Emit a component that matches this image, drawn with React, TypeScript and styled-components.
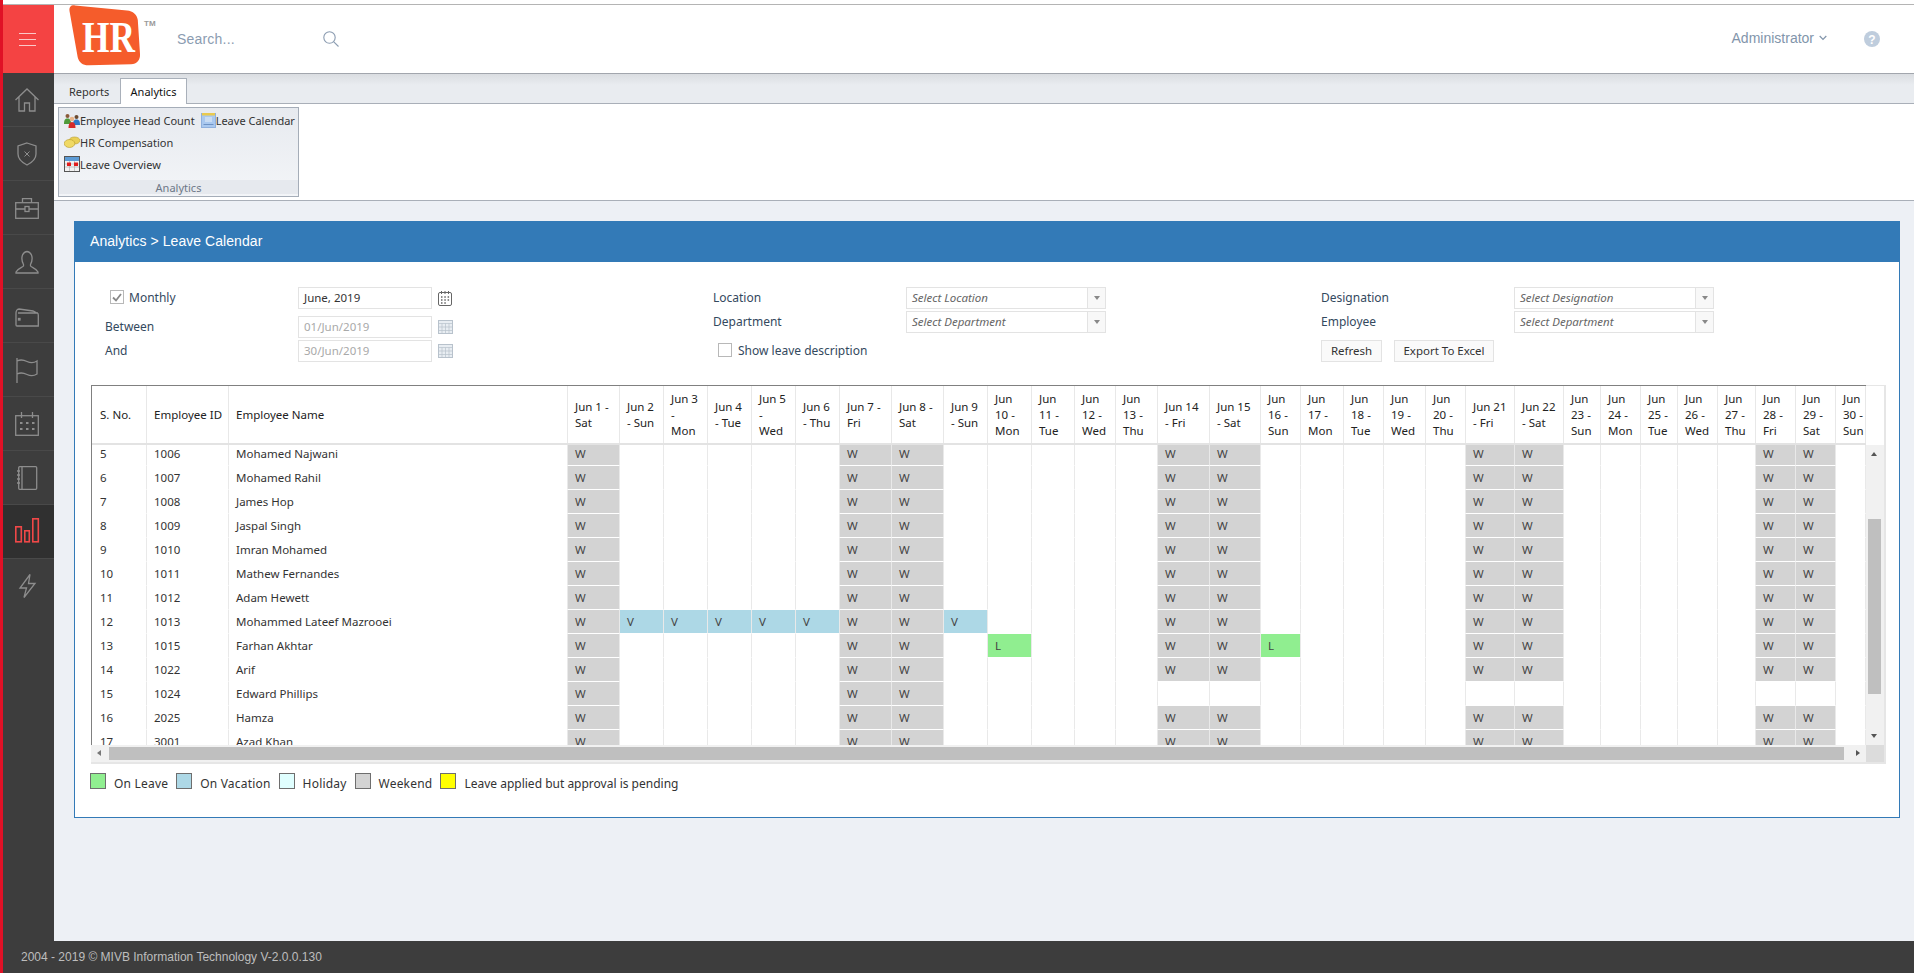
import React from "react";
import styled, { createGlobalStyle } from "styled-components";

const BODY_FONT = `"Noto Sans", "Liberation Sans", sans-serif`;
const UI_FONT = `"Liberation Sans", Arial, sans-serif`;

const GlobalStyle = createGlobalStyle`
  html, body { margin: 0; padding: 0; background: #fff; overflow: hidden; }
  * { box-sizing: border-box; }
`;

const Page = styled.div`
  width: 1914px; height: 973px; border-left: 3px solid #e01126;
  display: flex; flex-direction: column; font-family: ${BODY_FONT}; background: #fff;
`;
const TopLine = styled.div`height: 5px; border-bottom: 1px solid #b4b4b4; flex: none;`;
const MainRow = styled.div`flex: 1; display: flex; min-height: 0;`;
const Sidebar = styled.aside`width: 51px; flex: none; background: #3d3d3d; display: flex; flex-direction: column;`;
const MenuButton = styled.div`
  height: 68px; background: #f44343; display: flex; flex-direction: column; justify-content: center;
  gap: 5px; padding-left: 16px;
  span { display: block; width: 17px; height: 1px; background: #fbc9c9; }
`;
const NavItem = styled.div<{ $active?: boolean }>`
  height: 54px; display: flex; align-items: center; justify-content: center; padding-right: 3px;
  color: ${p => (p.$active ? "#f04848" : "#8d8d8d")};
  background: ${p => (p.$active ? "#303030" : "transparent")};
  border-bottom: 1px solid #494949;
  &:last-child { border-bottom: none; }
`;
const Content = styled.main`flex: 1; min-width: 0; display: flex; flex-direction: column; background: #edf0f5;`;
const Header = styled.header`
  height: 69px; flex: none; background: #fff; border-bottom: 1px solid #a2a6ad;
  display: flex; align-items: flex-start; padding-left: 15px; font-family: ${UI_FONT};
`;
const SearchBox = styled.div`
  margin: 23px 0 0 19px; width: 162px; height: 22px; display: flex; align-items: center;
  justify-content: space-between; color: #8b9cb1; font-size: 14px; letter-spacing: .2px;
`;
const UserArea = styled.div`
  margin: 26px 0 0 auto; padding-right: 34px; display: flex; align-items: center; color: #8295ab; font-size: 14px;
`;
const UserName = styled.span`display: flex; align-items: center; gap: 5px; margin: -2px 37px 0 0;`;
const TabStrip = styled.nav`
  height: 30px; flex: none; display: flex; align-items: flex-end; padding-left: 15px; font-size: 11px;
  background: linear-gradient(#dadde1, #e9ecf0 38%); border-bottom: 1px solid #a9afb8; color: #333;
`;
const Tab = styled.div<{ $active?: boolean }>`
  height: ${p => (p.$active ? "26px" : "25px")}; display: flex; align-items: center; justify-content: center;
  width: ${p => (p.$active ? "67px" : "51px")}; margin-bottom: -1px;
  ${p => (p.$active
    ? "background:#fff;border:1px solid #a9b0ba;border-bottom:none;color:#111;"
    : "justify-content:flex-start;")}
`;
const Ribbon = styled.section`
  height: 97px; flex: none; background: #fff; border-bottom: 1px solid #a9afb8; padding: 3px 0 0 4px;
`;
const RibbonGroup = styled.div`
  width: 241px; height: 90px; border: 1px solid #a5adb8; padding-top: 1px; display: flex; flex-direction: column;
  background: linear-gradient(#e7eaef, #f3f5f8); font-size: 11px; color: #333;
`;
const RibbonRow = styled.div`height: 22px; display: flex; align-items: center; padding-left: 5px; gap: 6px;`;
const RibbonItem = styled.div`display: flex; align-items: center; gap: 0; white-space: nowrap;`;
const RibbonCaption = styled.div`
  margin-top: auto; margin-bottom: 2px; height: 14px; line-height: 16px; background: #e6e9ee; text-align: center;
  color: #6d7787; font-size: 11px;
`;
const Workspace = styled.div`flex: 1; padding: 20px 14px 0 20px; min-height: 0;`;
const Panel = styled.section`height: 597px; background: #fff; border: 1px solid #337ab7;`;
const PanelHeading = styled.h2`
  margin: -1px -1px 0; height: 41px; background: #337ab7; color: #fff; font: 400 14px/41px ${UI_FONT};
  padding-left: 16px; letter-spacing: .06px;
`;
const FilterGrid = styled.div`
  display: grid; grid-template-columns: 638px 608px 1fr; margin-top: 25px; height: 75px; color: #34495e; font-size: 12px;
`;
const FilterColumn = styled.div<{ $indent?: number }>`
  display: flex; flex-direction: column; gap: 2px; padding-left: ${p => p.$indent ?? 0}px;
`;
const FieldRow = styled.div<{ $gapTop?: number }>`
  display: flex; align-items: center; height: 22px; margin-top: ${p => p.$gapTop ?? 0}px;
`;
const FieldLabel = styled.div`width: 193px; height: 100%; padding-bottom: 2px; flex: none; display: flex; align-items: center; white-space: nowrap;`;
const CheckLabel = styled.label<{ $left: number; $gap: number }>`
  display: flex; align-items: center; gap: ${p => p.$gap}px; margin-left: ${p => p.$left}px; white-space: nowrap;
`;
const CheckBox = styled.span`
  width: 14px; height: 14px; border: 1px solid #b8b8b8; background: #fff; display: flex;
  align-items: center; justify-content: center; color: #888;
`;
const TextField = styled.div<{ $disabled?: boolean }>`
  width: 134px; height: 22px; border: 1px solid #e3e3e3; padding-left: 5px; line-height: 19px; font-size: 11.5px;
  color: ${p => (p.$disabled ? "#a9a9a9" : "#333")};
`;
const IconSlot = styled.span`margin-left: 6px; display: flex;`;
const SelectBox = styled.div`
  width: 200px; height: 22px; border: 1px solid #e3e3e3; display: flex; align-items: center;
  font-size: 11.5px; font-style: italic; color: #666;
`;
const SelectText = styled.span`flex: 1; padding: 0 0 2px 5px; white-space: nowrap;`;
const SelectArrow = styled.span`
  width: 18px; height: 100%; flex: none; border-left: 1px solid #e3e3e3; background: #f8f8f8;
  display: flex; align-items: center; justify-content: center;
  &::after { content: ""; border: 3.5px solid transparent; border-top: 4px solid #888; border-bottom: 0; }
`;
const ButtonRow = styled.div`display: flex; gap: 12px; margin-top: 5px;`;
const ActionButton = styled.button<{ $w: number }>`
  width: ${p => p.$w}px; height: 22px; padding: 0 0 2px; border: 1px solid #e3e3e3; background: #fafafa; color: #333;
  font: 400 11.5px ${BODY_FONT};
`;
const GridFrame = styled.div`
  width: 1795px; margin: 23px 0 0 16px; border-bottom: 2px solid #e6e6e6; border-right: 2px solid #e6e6e6;
  display: flex; flex-direction: column; font-size: 11.5px; color: #333;
`;
const GridTop = styled.div`display: flex; height: 360px;`;
const GridViewport = styled.div`
  width: 1775px; flex: none; border-left: 1px solid #808080; border-top: 1px solid #808080; overflow: hidden;
`;
const GridTable = styled.table`border-collapse: separate; border-spacing: 0; table-layout: fixed; width: 1774px;`;
const HeadCell = styled.th`
  height: 57px; padding: 0 0 0 7px; text-align: left; font-weight: 400; line-height: 16px; white-space: nowrap;
  border-right: 1px solid #e8e8e8; color: #222;
  &:first-child { padding-left: 8px; }
`;
const HeadRule = styled.div`height: 2px; background: #e3e3e3;`;
const BodyClip = styled.div`height: 300px; overflow: hidden;`;
const BodyTable = styled(GridTable)`margin-top: -3px;`;
const CELL_COLORS: Record<string, string> = { W: "#d3d3d3", V: "#add8e6", L: "#90ee90", "": "#fff" };
const BodyCell = styled.td<{ $kind?: string }>`
  height: 24px; padding: 0 0 0 7px; white-space: nowrap; overflow: hidden;
  background: ${p => CELL_COLORS[p.$kind ?? ""]}; border-bottom: 1px solid #fff; border-right: 1px solid #e9e9e9;
  color: ${p => (p.$kind ? "#444" : "#333")};
  &:first-child { padding-left: 8px; }
`;
const VScroll = styled.div`
  width: 18px; flex: none; border-top: 1px solid #e6e6e6; padding-top: 59px; display: flex; flex-direction: column;
`;
const VTrack = styled.div`flex: 1; background: #f1f1f1; position: relative; display: flex; flex-direction: column; align-items: center;`;
const VThumb = styled.div`position: absolute; left: 2px; top: 74px; width: 13px; height: 175px; background: #bfbfbf;`;
const UpArrow = styled.span`
  position: absolute; top: 7px; left: 5px; border: 3.5px solid transparent; border-bottom: 4px solid #555; border-top: 0;
`;
const DownArrow = styled.span`
  position: absolute; bottom: 7px; left: 5px; border: 3.5px solid transparent; border-top: 4px solid #555; border-bottom: 0;
`;
const HScroll = styled.div`height: 17px; background: #f1f1f1; display: flex; position: relative; align-items: center;`;
const HThumb = styled.div`margin-left: 18px; width: 1735px; height: 13px; background: #bfbfbf;`;
const LeftArrow = styled.span`
  position: absolute; left: 6px; top: 5px; border: 3.5px solid transparent; border-right: 4px solid #777; border-left: 0;
`;
const RightArrow = styled.span`
  position: absolute; left: 1765px; top: 5px; border: 3.5px solid transparent; border-left: 4px solid #555; border-right: 0;
`;
const HCorner = styled.div`position: absolute; right: 0; top: 0; width: 18px; height: 17px; background: #dcdcdc;`;
const Legend = styled.div`
  display: flex; align-items: flex-start; margin: 9px 0 0 15px; font-size: 12px; color: #333;
`;
const LegendItem = styled.div`
  display: flex; align-items: flex-start; gap: 8px; margin-right: 8px; white-space: nowrap; line-height: 22px;
  letter-spacing: .2px;
  &:last-child { letter-spacing: 0; }
`;
const Swatch = styled.span<{ $color: string }>`
  width: 16px; height: 16px; flex: none; border: 1px solid #6e6e6e; background: ${p => p.$color};
`;
const Footer = styled.footer`
  height: 32px; flex: none; background: #3d3d3d; color: #bdbdbd; font: 400 12px/32px ${UI_FONT};
  padding-left: 18px; white-space: nowrap;
`;

const ends = [147,229,568,620,664,708,752,796,840,892,944,988,1032,1075,1116,1158,1210,1261,1301,1344,1384,1426,1466,1515,1564,1601,1641,1678,1718,1756,1796,1836,1866];
const widths = ends.map((e, i) => e - (i === 0 ? 92 : ends[i - 1]));

const dayNames = ["Sat","Sun","Mon","Tue","Wed","Thu","Fri"];
const threeLine = new Set([3, 5]);
const twoLineTrail = new Set([1, 7, 8]);
const dayHead = (d: number): string[] => {
  const n = dayNames[(d - 1) % 7];
  if (threeLine.has(d)) return [`Jun ${d}`, "-", n];
  if (twoLineTrail.has(d)) return [`Jun ${d} -`, n];
  if (d < 10 || d === 14 || d === 15 || d === 21 || d === 22) return [`Jun ${d}`, `- ${n}`];
  return ["Jun", `${d} -`, n];
};

const WEEKEND = [1, 7, 8, 14, 15, 21, 22, 28, 29];
const people: [number, number, string][] = [
  [5,1006,"Mohamed Najwani"],[6,1007,"Mohamed Rahil"],[7,1008,"James Hop"],[8,1009,"Jaspal Singh"],
  [9,1010,"Imran Mohamed"],[10,1011,"Mathew Fernandes"],[11,1012,"Adam Hewett"],[12,1013,"Mohammed Lateef Mazrooei"],
  [13,1015,"Farhan Akhtar"],[14,1022,"Arif"],[15,1024,"Edward Phillips"],[16,2025,"Hamza"],[17,3001,"Azad Khan"],
];
const cellFor = (sn: number, d: number): string => {
  if (sn === 15) return [1, 7, 8].includes(d) ? "W" : "";
  if (WEEKEND.includes(d)) return "W";
  if (sn === 12 && [2, 3, 4, 5, 6, 9].includes(d)) return "V";
  if (sn === 13 && (d === 10 || d === 16)) return "L";
  return "";
};

const Ic = ({ children, w = 24, h = 24 }: { children: React.ReactNode; w?: number; h?: number }) => (
  <svg width={w} height={h} viewBox={`0 0 ${w} ${h}`} fill="none" stroke="currentColor" strokeWidth={1.3} overflow="visible">{children}</svg>
);
const navIcons = [
  <Ic><path d="M.5 12 12 1l11.5 11M4 9v14h5.5v-8h5v8H20V9" /></Ic>,
  <Ic><path d="M12 1l9 3v8c0 6-5 9-9 11-4-2-9-5-9-11V4z" /><path d="M9.500 9.500l5 5m0-5l-5 5" strokeWidth={1} /></Ic>,
  <Ic><rect x=".7" y="6.700" width="22.600" height="15.600" /><path d="M7.500 6.500V2.700h9v3.800M.7 13H10m4 0h9.300" /><rect x="10" y="10.500" width="4" height="5" /></Ic>,
  <Ic><path d="M8.500 14.500C6 10 6 2.500 12 1.500c6 1 6 8.500 3.500 13v1.500c1 1.500 6 2.500 7.500 6v1H1v-1c1.500-3.500 6.500-4.500 7.500-6z" /></Ic>,
  <Ic><path d="M1 9c0-2 1-4 3-4l14 2 4 2c1 0 1.300 1 1.300 2v11H2c-.7 0-1-.5-1-1zM3 9h20" /><rect x="3.500" y="14.500" width="1.500" height="1.500" fill="currentColor" /></Ic>,
  <Ic><path d="M2 0v25M2 3c4-2 7-1 10 .5s7 1.500 10-.5v13c-3 2-7 2-10 .5s-6-2.500-10-.5" /></Ic>,
  <Ic><rect x=".7" y="3.700" width="22.600" height="19.600" /><path d="M6.500 0v6M17.500 0v6" /><path d="M5 11h2.500M11 11h2.500M17 11h2.500M5 17h2.500M11 17h2.500M17 17h2.500" strokeWidth={2.200} /></Ic>,
  <Ic><rect x="3.700" y=".7" width="18" height="22.600" rx="1" /><path d="M7 1v22M2 5h3M2 9h3M2 13h3M2 17h3" /></Ic>,
  <Ic><g strokeWidth={1.6}><rect x=".8" y="6.800" width="5.500" height="15" /><rect x="9.800" y="10.800" width="4.500" height="11" /><rect x="17.800" y="-1.200" width="5.500" height="23" /></g></Ic>,
  <Ic><path d="M15 .5 5 14h6.500L9 23.500 20 9.500h-6.500z" /></Ic>,
];

const Logo = () => (
  <svg width="89" height="62" viewBox="0 0 89 62">
    <path d="M.5 6C0 2 2 0 6 .4L58 5.500c6 .6 10 4 10.800 9.500L71 49c.4 6-3 10-9 10.300L20 60.300c-6 .2-10-2.500-11.300-8z" fill="#f55c2b" />
    <text x="13" y="47" fill="#fff" fontFamily="'Liberation Serif', serif" fontWeight="700" fontSize="45" textLength="53" lengthAdjust="spacingAndGlyphs">HR</text>
    <text x="75" y="21" fill="#9a9a9a" fontFamily="'Liberation Sans', sans-serif" fontWeight="700" fontSize="8">TM</text>
  </svg>
);
const SearchIcon = () => (
  <svg width="16" height="16" viewBox="0 0 16 16" fill="none" stroke="#8b9cb1" strokeWidth="1.100"><circle cx="6.500" cy="6.500" r="5.700" /><path d="M10.800 10.800 15.500 15.500" /></svg>
);
const Chevron = () => (
  <svg width="8" height="6" viewBox="0 0 8 6" fill="none" stroke="#8295ab" strokeWidth="1.200"><path d="M.7 1 4 4.500 7.300 1" /></svg>
);
const HelpIcon = () => (
  <svg width="16" height="16" viewBox="0 0 16 16"><circle cx="8" cy="8" r="8" fill="#bfcddd" /><text x="8" y="12.500" textAnchor="middle" fill="#fff" fontFamily="'Liberation Sans', sans-serif" fontWeight="700" fontSize="12">?</text></svg>
);
const PeopleIcon = () => (
  <svg width="16" height="16" viewBox="0 0 16 16"><circle cx="3.500" cy="4" r="2" fill="#8a5a3a" /><path d="M0 12c0-4 1-5.500 3.500-5.500S7 8 7 12z" fill="#4f9a3a" /><circle cx="12.500" cy="5" r="2" fill="#6b4a30" /><path d="M9 13c0-4 1-5.500 3.500-5.500S16 9 16 13z" fill="#2f78c8" /><circle cx="8" cy="7" r="2.300" fill="#e9b48a" /><path d="M4.500 16c0-4 1-6 3.500-6s3.500 2 3.500 6z" fill="#d62a2a" /></svg>
);
const CoinIcon = () => (
  <svg width="16" height="16" viewBox="0 0 16 16"><ellipse cx="10.500" cy="6.500" rx="5.500" ry="3.500" fill="#e9cf55" stroke="#b79a2a" strokeWidth=".6" /><ellipse cx="5.500" cy="9.500" rx="5.300" ry="4" fill="#f0d964" stroke="#b79a2a" strokeWidth=".6" /></svg>
);
const OverviewIcon = () => (
  <svg width="16" height="16" viewBox="0 0 16 16"><rect x=".5" y=".5" width="15" height="15" fill="#f2f2f2" stroke="#555" /><rect x="1" y="1" width="14" height="4" fill="#5c9bd5" /><path d="M1 8h14M1 11h14M5.500 5v10M10.500 5v10" stroke="#aaa" strokeWidth=".6" /><rect x="3" y="6.500" width="4" height="3.500" fill="#e21c1c" /><rect x="10" y="6.500" width="4" height="3.500" fill="#e21c1c" /></svg>
);
const LeaveCalIcon = () => (
  <svg width="15" height="15" viewBox="0 0 15 15"><rect x=".5" y=".5" width="14" height="14" fill="#a9c8ef" stroke="#8fb0dd" /><rect x="1" y="0" width="13" height="2.500" fill="#e9c94f" /><rect x="4" y="4" width="7" height="5" fill="#c9dcf3" /><path d="M2.500 11.500h10" stroke="#6f93c4" /></svg>
);
const MonthCalIcon = () => (
  <svg width="14" height="15" viewBox="0 0 14 15" fill="none" stroke="#666"><rect x=".5" y="1.500" width="13" height="13" rx="1.500" /><path d="M3.500 0v3M7 0v3M10.500 0v3" /><path d="M3 6h1.500M6.300 6h1.500M9.600 6h1.500M3 9h1.500M6.300 9h1.500M9.600 9h1.500M3 12h1.500M6.300 12h1.500" strokeWidth="1.500" /></svg>
);
const GridCalIcon = () => (
  <svg width="15" height="14" viewBox="0 0 15 14" fill="#e8edf2" stroke="#b8c2cc"><rect x=".5" y=".5" width="14" height="13" /><path d="M.5 3.500h14M.5 7h14M.5 10.500h14M4 3.500v10M7.500 3.500v10M11 3.500v10" strokeWidth=".7" /></svg>
);
const Check = () => (
  <svg width="10" height="9" viewBox="0 0 10 9" fill="none" stroke="currentColor" strokeWidth="1.800"><path d="M1 4.500 4 7.500 9 1" /></svg>
);

const Cols = () => <colgroup>{widths.map((w, i) => <col key={i} width={w} />)}</colgroup>;
const days = Array.from({ length: 30 }, (_, i) => i + 1);

export default function App() {
  return (
    <Page>
      <GlobalStyle />
      <TopLine />
      <MainRow>
        <Sidebar>
          <MenuButton><span /><span /><span /></MenuButton>
          {navIcons.map((icon, i) => <NavItem key={i} $active={i === 8}>{icon}</NavItem>)}
        </Sidebar>
        <Content>
          <Header>
            <Logo />
            <SearchBox>Search...<SearchIcon /></SearchBox>
            <UserArea>
              <UserName>Administrator <Chevron /></UserName>
              <HelpIcon />
            </UserArea>
          </Header>
          <TabStrip>
            <Tab>Reports</Tab>
            <Tab $active>Analytics</Tab>
          </TabStrip>
          <Ribbon>
            <RibbonGroup>
              <RibbonRow>
                <RibbonItem><PeopleIcon />Employee Head Count</RibbonItem>
                <RibbonItem><LeaveCalIcon />Leave Calendar</RibbonItem>
              </RibbonRow>
              <RibbonRow><RibbonItem><CoinIcon />HR Compensation</RibbonItem></RibbonRow>
              <RibbonRow><RibbonItem><OverviewIcon />Leave Overview</RibbonItem></RibbonRow>
              <RibbonCaption>Analytics</RibbonCaption>
            </RibbonGroup>
          </Ribbon>
          <Workspace>
            <Panel>
              <PanelHeading>Analytics &gt; Leave Calendar</PanelHeading>
              <FilterGrid>
                <FilterColumn $indent={30}>
                  <FieldRow>
                    <FieldLabel><CheckLabel $left={5} $gap={5}><CheckBox><Check /></CheckBox>Monthly</CheckLabel></FieldLabel>
                    <TextField>June, 2019</TextField>
                    <IconSlot><MonthCalIcon /></IconSlot>
                  </FieldRow>
                  <FieldRow $gapTop={5}>
                    <FieldLabel>Between</FieldLabel>
                    <TextField $disabled>01/Jun/2019</TextField>
                    <IconSlot><GridCalIcon /></IconSlot>
                  </FieldRow>
                  <FieldRow>
                    <FieldLabel>And</FieldLabel>
                    <TextField $disabled>30/Jun/2019</TextField>
                    <IconSlot><GridCalIcon /></IconSlot>
                  </FieldRow>
                </FilterColumn>
                <FilterColumn>
                  <FieldRow>
                    <FieldLabel>Location</FieldLabel>
                    <SelectBox><SelectText>Select Location</SelectText><SelectArrow /></SelectBox>
                  </FieldRow>
                  <FieldRow>
                    <FieldLabel>Department</FieldLabel>
                    <SelectBox><SelectText>Select Department</SelectText><SelectArrow /></SelectBox>
                  </FieldRow>
                  <FieldRow $gapTop={5}>
                    <FieldLabel><CheckLabel $left={5} $gap={6}><CheckBox />Show leave description</CheckLabel></FieldLabel>
                  </FieldRow>
                </FilterColumn>
                <FilterColumn>
                  <FieldRow>
                    <FieldLabel>Designation</FieldLabel>
                    <SelectBox><SelectText>Select Designation</SelectText><SelectArrow /></SelectBox>
                  </FieldRow>
                  <FieldRow>
                    <FieldLabel>Employee</FieldLabel>
                    <SelectBox><SelectText>Select Department</SelectText><SelectArrow /></SelectBox>
                  </FieldRow>
                  <ButtonRow>
                    <ActionButton $w={61}>Refresh</ActionButton>
                    <ActionButton $w={100}>Export To Excel</ActionButton>
                  </ButtonRow>
                </FilterColumn>
              </FilterGrid>
              <GridFrame>
                <GridTop>
                  <GridViewport>
                    <GridTable>
                      <Cols />
                      <thead>
                        <tr>
                          <HeadCell>S. No.</HeadCell>
                          <HeadCell>Employee ID</HeadCell>
                          <HeadCell>Employee Name</HeadCell>
                          {days.map(d => (
                            <HeadCell key={d}>
                              {dayHead(d).map((line, i) => <React.Fragment key={i}>{i > 0 && <br />}{line}</React.Fragment>)}
                            </HeadCell>
                          ))}
                        </tr>
                      </thead>
                    </GridTable>
                    <HeadRule />
                    <BodyClip>
                      <BodyTable>
                        <Cols />
                        <tbody>
                          {people.map(([sn, id, name]) => (
                            <tr key={sn}>
                              <BodyCell>{sn}</BodyCell>
                              <BodyCell>{id}</BodyCell>
                              <BodyCell>{name}</BodyCell>
                              {days.map(d => {
                                const k = cellFor(sn, d);
                                return <BodyCell key={d} $kind={k}>{k}</BodyCell>;
                              })}
                            </tr>
                          ))}
                        </tbody>
                      </BodyTable>
                    </BodyClip>
                  </GridViewport>
                  <VScroll>
                    <VTrack><UpArrow /><VThumb /><DownArrow /></VTrack>
                  </VScroll>
                </GridTop>
                <HScroll>
                  <LeftArrow /><HThumb /><RightArrow /><HCorner />
                </HScroll>
              </GridFrame>
              <Legend>
                <LegendItem><Swatch $color="#90ee90" />On Leave</LegendItem>
                <LegendItem><Swatch $color="#add8e6" />On Vacation</LegendItem>
                <LegendItem><Swatch $color="#e0ffff" />Holiday</LegendItem>
                <LegendItem><Swatch $color="#d3d3d3" />Weekend</LegendItem>
                <LegendItem><Swatch $color="#ffff00" />Leave applied but approval is pending</LegendItem>
              </Legend>
            </Panel>
          </Workspace>
        </Content>
      </MainRow>
      <Footer>2004 - 2019 © MIVB Information Technology V-2.0.0.130</Footer>
    </Page>
  );
}
